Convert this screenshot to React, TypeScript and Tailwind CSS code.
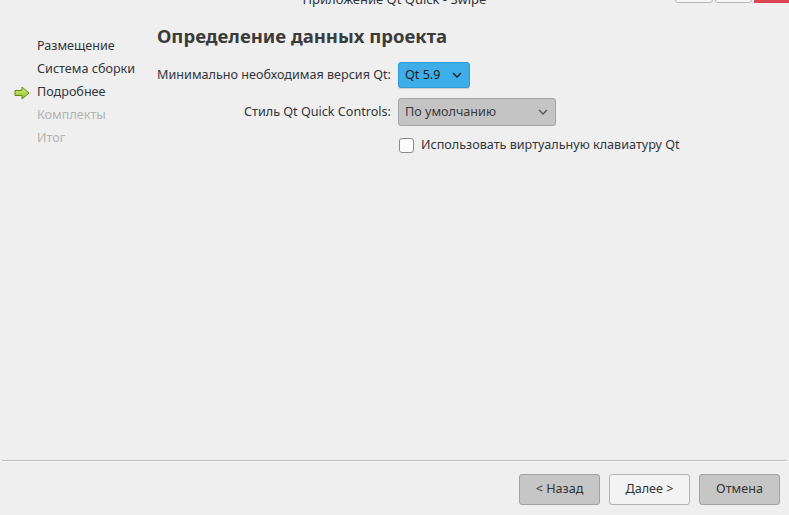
// Qt Creator "new project" wizard page — project details step.

const STEPS: Array<{ label: string; state: "done" | "current" | "todo" }> = [
  { label: "Размещение", state: "done" },
  { label: "Система сборки", state: "done" },
  { label: "Подробнее", state: "current" },
  { label: "Комплекты", state: "todo" },
  { label: "Итог", state: "todo" },
];

function Chevron({ className }: { className?: string }) {
  return (
    <svg viewBox="0 0 10 6" className={className} fill="none" stroke="currentColor" strokeWidth="1.3">
      <path d="M1 1l4 4 4-4" />
    </svg>
  );
}

function CurrentArrow() {
  return (
    <svg viewBox="0 0 16 14" className="h-[14px] w-[16px]">
      <defs>
        <linearGradient id="ga" x1="0" y1="0" x2="0" y2="1">
          <stop offset="0" stopColor="#d9ef7a" />
          <stop offset="1" stopColor="#8fbf2a" />
        </linearGradient>
      </defs>
      <path d="M1 4.5h7V1l7 6-7 6V9.5H1z" fill="url(#ga)" stroke="#5f8a1a" strokeWidth="1" strokeLinejoin="round" />
    </svg>
  );
}

export default function App() {
  return (
    <div
      className="relative flex h-[515px] w-[789px] flex-col overflow-hidden bg-[#efefef] text-[12.6px] text-[#31363b]"
      style={{ fontFamily: '"Noto Sans", "Open Sans", sans-serif' }}
    >
      {/* title bar, mostly scrolled off the top */}
      <div className="relative h-[8px] shrink-0">
        <div className="absolute left-0 right-0 top-[-10px] whitespace-nowrap text-center text-[13px] text-[#31363b]">
          Приложение Qt Quick - Swipe
        </div>
        <div className="absolute right-0 top-[-6px] flex gap-[2px]">
          <div className="h-[9px] w-[38px] rounded-b-[3px] border border-[#b8b8b8] bg-[#f4f4f4]" />
          <div className="h-[9px] w-[37px] rounded-b-[3px] border border-[#b8b8b8] bg-[#f4f4f4]" />
          <div className="h-[9px] w-[35px] bg-[#da4453]" />
        </div>
      </div>

      <div className="flex flex-1">
        {/* steps */}
        <div className="w-[157px] shrink-0 pt-[29px]">
          <ul className="flex flex-col gap-[4px]">
            {STEPS.map((s) => (
              <li key={s.label} className="relative flex h-[19px] items-center pl-[37px]">
                {s.state === "current" && (
                  <span className="absolute left-[14px] top-[3px]">
                    <CurrentArrow />
                  </span>
                )}
                <span className={s.state === "todo" ? "text-[#b3b3b3]" : "text-[#31363b]"}>{s.label}</span>
              </li>
            ))}
          </ul>
        </div>

        {/* form */}
        <div className="flex-1 pt-[15px]">
          <h1 className="text-[18.5px] font-bold leading-[26px] text-[#3b3b3b]">Определение данных проекта</h1>
          <div className="mt-[13px] grid grid-cols-[234px_auto] items-center gap-x-[7px] gap-y-[10px]">
            <label className="whitespace-nowrap text-right">Минимально необходимая версия Qt:</label>
            <div>
              <button className="flex h-[26px] w-[72px] items-center justify-between rounded-[3px] border border-[#2f9bd6] bg-[#3daee9] pl-[6px] pr-[7px] text-[#1d1d1d] shadow-[0_1px_1px_rgba(0,0,0,0.15)]">
                <span>Qt 5.9</span>
                <Chevron className="h-[6px] w-[10px] text-[#1d1d1d]" />
              </button>
            </div>
            <label className="whitespace-nowrap text-right">Стиль Qt Quick Controls:</label>
            <div>
              <button className="flex h-[28px] w-[158px] items-center justify-between rounded-[3px] border border-[#a6a6a6] bg-[#c4c4c4] pl-[6px] pr-[7px] text-[#3a3a3a]">
                <span>По умолчанию</span>
                <Chevron className="h-[6px] w-[10px] text-[#555]" />
              </button>
            </div>
            <div />
            <label className="flex items-center gap-[7px] pl-[1px]">
              <span className="h-[15px] w-[15px] rounded-[3px] border border-[#8a8a8a] bg-[#fcfcfc]" />
              <span className="whitespace-nowrap">Использовать виртуальную клавиатуру Qt</span>
            </label>
          </div>
        </div>
      </div>

      {/* footer */}
      <div className="mx-[2px] h-[2px] border-t border-[#bdbdbd] bg-[#fafafa]" />
      <div className="flex justify-end gap-[9px] pb-[10px] pr-[9px] pt-[12px]">
        <button className="h-[31px] w-[81px] rounded-[3px] border border-[#a3a3a3] bg-[#c6c6c6] text-[#333]">&lt; Назад</button>
        <button className="h-[31px] w-[81px] rounded-[3px] border border-[#b4b4b4] bg-[#f3f3f3] text-[#333]">Далее &gt;</button>
        <button className="h-[31px] w-[81px] rounded-[3px] border border-[#a3a3a3] bg-[#c6c6c6] text-[#333]">Отмена</button>
      </div>
    </div>
  );
}
